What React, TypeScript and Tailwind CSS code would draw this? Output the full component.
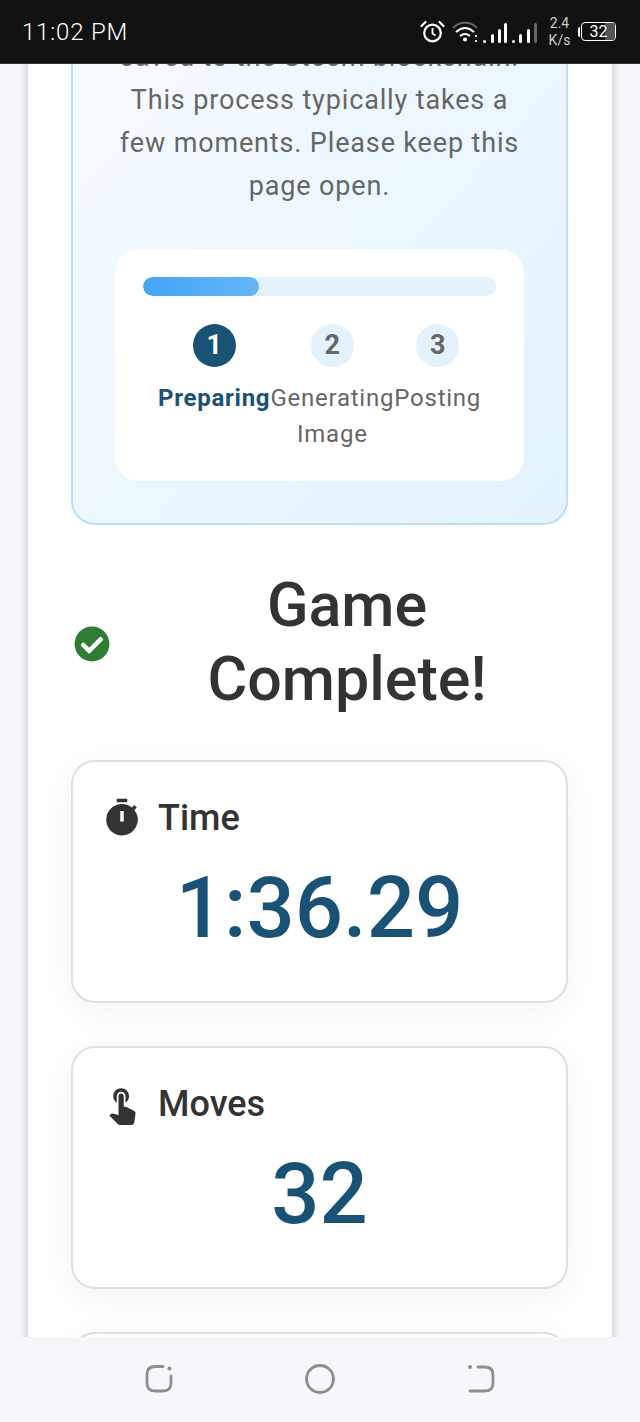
import React from "react";
import { MdTimer, MdTouchApp } from "react-icons/md";
import { FaCheckCircle } from "react-icons/fa";

const steps = [
  { n: "1", label: "Preparing", active: true },
  { n: "2", label: "Generating Image", active: false, wrap: "w-[124px]" },
  { n: "3", label: "Posting", active: false },
];

const bars = [
  { x: 31, y: 20 },
  { x: 39, y: 14 },
  { x: 46, y: 9 },
  { x: 52, y: 3 },
  { x: 60, y: 20 },
  { x: 67, y: 14 },
  { x: 75, y: 9 },
  { x: 82, y: 3, off: true },
];

function StatusIcons() {
  return (
    <div className="flex items-center">
      {/* alarm */}
      <svg width="25" height="24" viewBox="0 0 25 24" fill="none" stroke="#fff" strokeWidth="2.2" className="mr-[7px]">
        <circle cx="12.5" cy="13" r="8.3" />
        <path d="M12.5 8v5.5l3 2" strokeWidth="1.8" />
        <path d="M1.5 6 L5.5 2 M23.5 6 L19.5 2" strokeLinecap="round" />
      </svg>
      {/* wifi + signal */}
      <svg width="85" height="24" viewBox="0 0 85 24" fill="none" className="mr-[12px]">
        <path d="M1 8 C 7 1, 19 1, 25 8" stroke="#666" strokeWidth="2" />
        <path d="M4 12 Q 13 4, 22 12" stroke="#fff" strokeWidth="2" />
        <path d="M8 16 Q 13 12, 18 16" stroke="#fff" strokeWidth="2" />
        <circle cx="13" cy="19.5" r="2" fill="#fff" />
        <rect x="23" y="15" width="2" height="2" fill="#ddd" />
        <rect x="23" y="20" width="2" height="2" fill="#ddd" />
        {bars.map((b) => (
          <rect key={b.x} x={b.x} y={b.y} width="3" height={23 - b.y} rx="1.5" fill={b.off ? "#666" : "#fff"} />
        ))}
      </svg>
      <div className="w-[21px] mr-[8px] flex flex-col items-center text-[14px] leading-[17px] text-[#ccc]">
        <span>2.4</span>
        <span>K/s</span>
      </div>
      <div className="flex items-center">
        <span className="w-[2px] h-[10px] bg-white rounded-l-sm mr-[1px]" />
        <span className="relative w-[35px] h-[19px] border-[1.5px] border-white rounded-[4px] flex items-center justify-center text-[16px] text-white">
          <span className="absolute right-0 top-0 bottom-0 w-[10px] bg-[#555] rounded-r-[2px]" />
          <span className="relative">32</span>
        </span>
      </div>
    </div>
  );
}

function StatCard({ icon, label, value }: { icon: React.ReactNode; label: string; value: string }) {
  return (
    <div className="h-[243px] shrink-0 mb-[43px] bg-white border-2 border-[#e0e0e0] rounded-[24px] shadow-[0_8px_32px_rgba(0,0,0,0.05)] px-[32px] pt-[32px]">
      <div className="flex items-center h-[48px] text-[36px] font-medium text-[#333]">
        <span className="w-[34px] mr-[19px] flex justify-center">{icon}</span>
        {label}
      </div>
      <div className="mt-[16px] text-center text-[85px] leading-[100px] font-medium text-[#1a5276]">{value}</div>
    </div>
  );
}

export default function App() {
  return (
    <div className="w-[640px] h-[1422px] flex flex-col bg-[#f5f7fb] overflow-hidden font-['Roboto',sans-serif]">
      <div className="h-[64px] shrink-0 bg-[#111] border-b border-[#333] flex items-center justify-between pl-[22px] pr-[24px] z-10">
        <span className="text-[24px] font-light tracking-[0.8px] text-white">11:02 PM</span>
        <StatusIcons />
      </div>

      <main className="flex-1 overflow-hidden">
        <div className="mx-[28px] -mt-[80px] h-[1400px] bg-white shadow-[0_0_10px_rgba(0,0,0,0.25)] pl-[43px] pr-[44px]">
          {/* progress banner, top part is scrolled away */}
          <div className="bg-gradient-to-br from-[#f7fbff] to-[#e3f2fd] border-2 border-[#bbdefb] rounded-[24px] px-[42px] pt-[50px] pb-[42px]">
            <p className="text-center text-[27px] leading-[43px] tracking-[0.85px] text-[#666]">
              saved to the Steem blockchain. This process typically takes a few moments. Please keep this page open.
            </p>
            <div className="mt-[41px] bg-white rounded-[24px] pt-[28px] px-[28px] pb-[29px]">
              <div className="h-[19px] bg-[#e3f2fd] rounded-full overflow-hidden">
                <div className="h-full w-[33%] rounded-full bg-gradient-to-r from-[#42a5f5] to-[#64b5f6]" />
              </div>
              <div className="mt-[28px] flex justify-center items-start">
                {steps.map((s) => (
                  <div key={s.n} className={`flex flex-col items-center text-center ${s.wrap ?? ""}`}>
                    <div
                      className={
                        s.active
                          ? "w-[43px] h-[43px] rounded-full flex items-center justify-center text-[27px] font-bold bg-[#1a5276] text-white"
                          : "w-[43px] h-[43px] rounded-full flex items-center justify-center text-[27px] font-bold bg-[#e3f2fd] text-[#666]"
                      }
                    >
                      {s.n}
                    </div>
                    <div
                      className={
                        s.active
                          ? "mt-[13px] text-[24px] leading-[36px] tracking-[0.75px] font-bold text-[#1a5276]"
                          : "mt-[13px] text-[24px] leading-[36px] tracking-[0.75px] text-[#666]"
                      }
                    >
                      {s.label}
                    </div>
                  </div>
                ))}
              </div>
            </div>
          </div>

          <div className="mt-[43px] mb-[44px] flex items-center">
            <FaCheckCircle className="ml-[3px] mt-[4px] shrink-0 text-[#2e7d32]" size={36} />
            <h1 className="flex-1 pl-[16px] text-center text-[61px] leading-[74px] font-medium text-[#333]">
              Game Complete!
            </h1>
          </div>

          <StatCard icon={<MdTimer size={42} className="shrink-0" />} label="Time" value="1:36.29" />
          <StatCard icon={<MdTouchApp size={42} className="shrink-0" />} label="Moves" value="32" />
          <div className="h-[243px] bg-white border-2 border-[#e0e0e0] rounded-[24px] shadow-[0_8px_32px_rgba(0,0,0,0.05)]" />
        </div>
      </main>

      <nav className="h-[85px] shrink-0 bg-[#f5f7fb] z-10 flex items-center justify-center gap-[120px] pb-[2px]">
        <svg width="40" height="40" viewBox="0 0 40 40" fill="none" stroke="#8e8e8e" strokeWidth="2.8" strokeLinecap="round">
          <path d="M23 7.5 H15 Q7 7.5 7 15.5 V24 Q7 32 15 32 H23 Q31 32 31 24 V17" />
          <circle cx="29.5" cy="9.5" r="2" fill="#8e8e8e" stroke="none" />
        </svg>
        <svg width="40" height="40" viewBox="0 0 40 40" fill="none" stroke="#8e8e8e" strokeWidth="2.8">
          <circle cx="20" cy="20" r="13.5" />
        </svg>
        <svg width="40" height="40" viewBox="0 0 40 40" fill="none" stroke="#8e8e8e" strokeWidth="2.8" strokeLinecap="round">
          <path d="M18 8 H25 Q33 8 33 16 V24 Q33 32 25 32 H10" />
          <circle cx="10" cy="8" r="2" fill="#8e8e8e" stroke="none" />
        </svg>
      </nav>
    </div>
  );
}
